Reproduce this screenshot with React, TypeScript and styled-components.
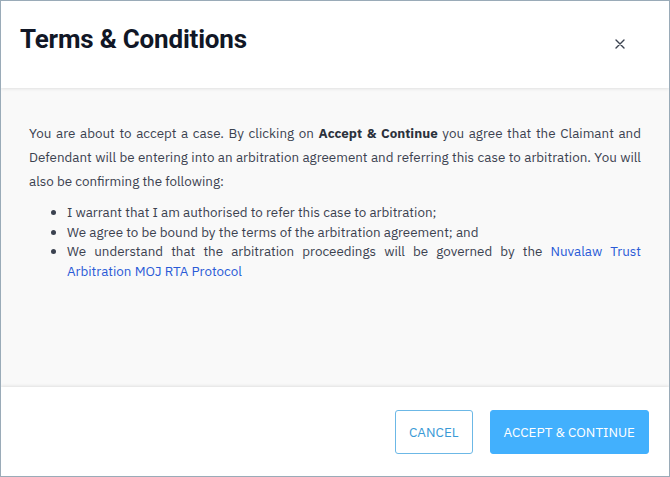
import React from 'react'
import styled, { createGlobalStyle } from 'styled-components'

const GlobalStyle = createGlobalStyle`
    html, body {
        margin: 0;
        padding: 0;
        height: 100%;
    }
    #root {
        height: 100%;
    }
    * {
        box-sizing: border-box;
    }
`

const App: React.FC = () => {
    return (
        <>
            <GlobalStyle />
            <StyledModal>
                <StyledHeader>
                    <StyledTitle>Terms &amp; Conditions</StyledTitle>
                    <StyledClose aria-label="close">
                        <svg width="10" height="10" viewBox="0 0 10 10">
                            <path d="M1 1L9 9M9 1L1 9" stroke="#3b4250" strokeWidth="1.4" strokeLinecap="round" />
                        </svg>
                    </StyledClose>
                </StyledHeader>
                <StyledBody>
                    <StyledParagraph>
                        You are about to accept a case. By clicking on <strong>Accept &amp; Continue</strong> you agree that the Claimant and Defendant will be entering into an arbitration agreement and referring this case to arbitration. You will also be confirming the following:
                    </StyledParagraph>
                    <StyledList>
                        <li>I warrant that I am authorised to refer this case to arbitration;</li>
                        <li>We agree to be bound by the terms of the arbitration agreement; and</li>
                        <li>
                            We understand that the arbitration proceedings will be governed by the{' '}
                            <StyledLink href="#">Nuvalaw Trust Arbitration MOJ RTA Protocol</StyledLink>
                        </li>
                    </StyledList>
                </StyledBody>
                <StyledFooter>
                    <StyledButton variant={'outline'}>Cancel</StyledButton>
                    <StyledButton variant={'primary'}>Accept &amp; Continue</StyledButton>
                </StyledFooter>
            </StyledModal>
        </>
    )
}

const StyledModal = styled.div`
    display: flex;
    flex-direction: column;
    height: 477px;
    width: 670px;
    border: 1px solid #9aabb8;
    background: #ffffff;
    font-family: "IBM Plex Sans", Inter, "Liberation Sans", sans-serif;
    overflow: hidden;
`

const StyledHeader = styled.div`
    display: flex;
    flex-direction: row;
    justify-content: space-between;
    align-items: center;
    height: 87px;
    padding: 0 41px 0 19px;
    background: #ffffff;
    box-shadow: 0 1px 3px rgba(0, 0, 0, 0.1);
    position: relative;
    z-index: 1;
    flex-shrink: 0;
`

const StyledTitle = styled.h1`
    margin: 0 0 11px 0;
    font-family: Roboto, "Liberation Sans", sans-serif;
    font-size: 26px;
    font-weight: 700;
    letter-spacing: -0.2px;
    color: #111726;
`

const StyledClose = styled.button`
    display: flex;
    align-items: center;
    justify-content: center;
    width: 16px;
    height: 16px;
    margin-bottom: 2px;
    padding: 0;
    border: none;
    background: transparent;
    cursor: pointer;
`

const StyledBody = styled.div`
    flex: 1;
    background: #f9f9f9;
    padding: 33px 28px 0 28px;
    color: #3b4250;
    font-size: 13.4px;
`

const StyledParagraph = styled.p`
    margin: 0 0 10px 0;
    line-height: 24px;
    text-align: justify;

    strong {
        font-weight: 700;
        color: #2b313c;
    }
`

const StyledList = styled.ul`
    margin: 0;
    padding-left: 38px;
    line-height: 19.5px;
    text-align: justify;
`

const StyledLink = styled.a`
    color: #2a5bd7;
    text-decoration: none;
`

const StyledFooter = styled.div`
    display: flex;
    flex-direction: row;
    justify-content: flex-end;
    align-items: center;
    gap: 17px;
    height: 89px;
    padding: 0 20px 0 0;
    background: #ffffff;
    box-shadow: 0 -1px 3px rgba(0, 0, 0, 0.1);
    position: relative;
    flex-shrink: 0;
`

interface StyledButtonProps {
    variant: 'outline' | 'primary'
}

const StyledButton = styled.button<StyledButtonProps>`
    height: 44px;
    padding: 0 13px;
    border-radius: 3px;
    font-family: "IBM Plex Sans", Inter, "Liberation Sans", sans-serif;
    font-size: 13.5px;
    font-weight: 400;
    text-transform: uppercase;
    cursor: pointer;
    border: 1px solid ${(props) => props.variant === 'primary' ? '#42b0fd' : '#6cb8e6'};
    background: ${(props) => props.variant === 'primary' ? '#42b0fd' : '#ffffff'};
    color: ${(props) => props.variant === 'primary' ? '#ffffff' : '#3a9ad6'};
`

export default App
